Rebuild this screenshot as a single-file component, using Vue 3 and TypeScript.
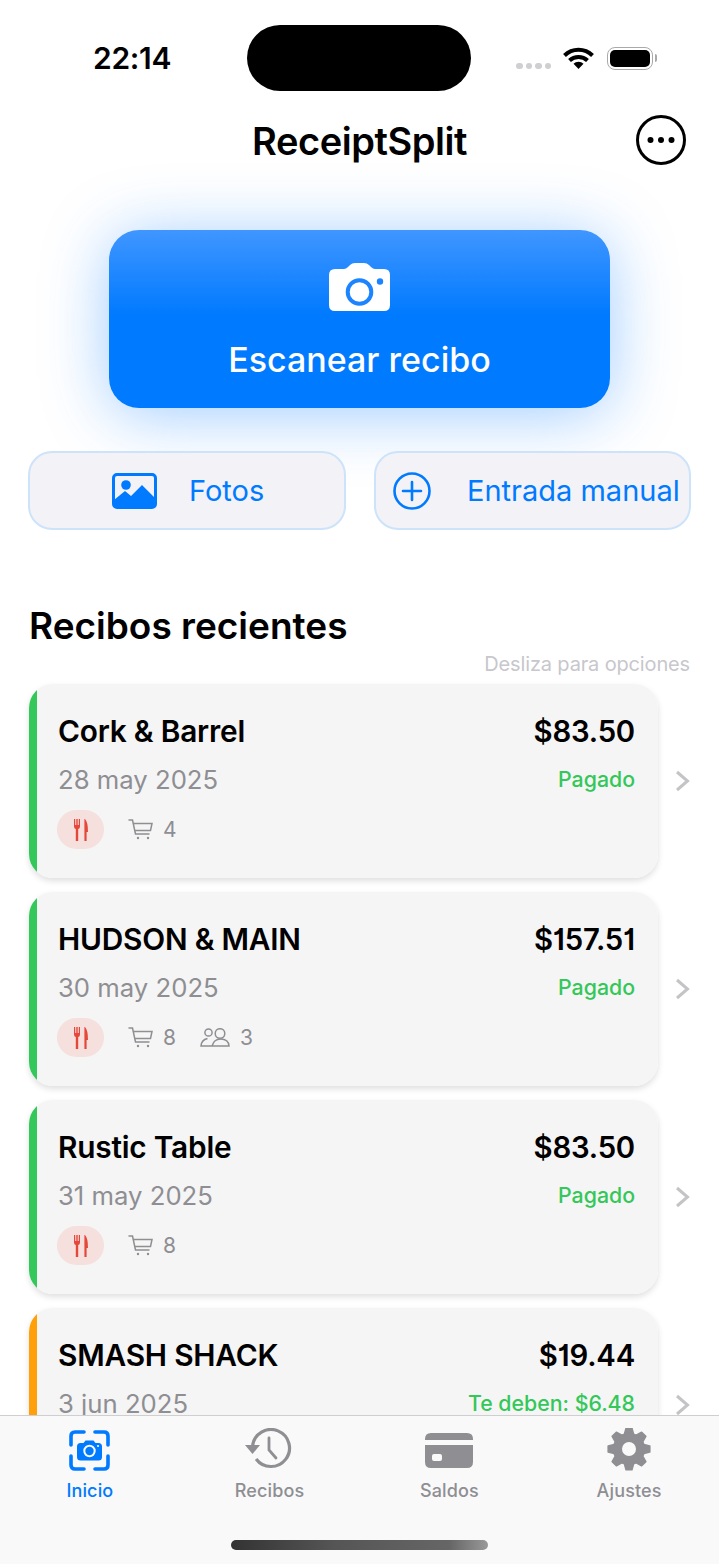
<template>
  <div class="phone">
    <header class="status">
      <span class="time">22:14</span>
      <div class="island"></div>
      <div class="dots"><i></i><i></i><i></i><i></i></div>
      <svg class="wifi" viewBox="0 0 31 22" width="31" height="22">
        <path d="M1.5 8.5a20 20 0 0 1 28 0" fill="none" stroke="#000" stroke-width="4" />
        <path d="M6.5 13.5a13 13 0 0 1 18 0" fill="none" stroke="#000" stroke-width="4" />
        <path d="M15.5 22l-5-5.2a7 7 0 0 1 10 0z" fill="#000" />
      </svg>
      <div class="battery"><div class="battery-fill"></div></div>
    </header>

    <nav class="nav">
      <h1>ReceiptSplit</h1>
      <svg class="more" viewBox="0 0 50 50" width="50" height="50">
        <circle cx="25" cy="25" r="23.5" fill="none" stroke="#000" stroke-width="3" />
        <circle cx="14.5" cy="25" r="3" />
        <circle cx="25" cy="25" r="3" />
        <circle cx="35.5" cy="25" r="3" />
      </svg>
    </nav>

    <button class="scan">
      <svg viewBox="0 0 61 48" width="61" height="48">
        <path
          d="M6 6H15Q17 6 19 4L21 2Q23 0 26 0H35Q38 0 40 2L42 4Q44 6 46 6H55Q61 6 61 12V42Q61 48 55 48H6Q0 48 0 42V12Q0 6 6 6Z"
          fill="#fff"
        />
        <circle cx="30.5" cy="29" r="11.8" fill="#fff" stroke="#1c84ff" stroke-width="4" />
        <circle cx="51" cy="18.5" r="3.2" fill="#1c84ff" />
      </svg>
      <span>Escanear recibo</span>
    </button>

    <div class="actions">
      <button class="action photos">
        <svg viewBox="0 0 45 36" width="45" height="36">
          <rect x="1.5" y="1.5" width="42" height="33" rx="3.5" fill="none" stroke="#007aff" stroke-width="3" />
          <circle cx="14" cy="12" r="4.8" fill="#007aff" />
          <path d="M2 27L13 18L19 23L30 12L43 25V32Q43 35 40 35H5Q2 35 2 32Z" fill="#007aff" />
        </svg>
        <span>Fotos</span>
      </button>
      <button class="action manual">
        <svg viewBox="0 0 38 38" width="38" height="38">
          <circle cx="19" cy="19" r="17.5" fill="none" stroke="#007aff" stroke-width="2.6" />
          <path d="M19 10V28M10 19H28" fill="none" stroke="#007aff" stroke-width="2.6" stroke-linecap="round" />
        </svg>
        <span>Entrada manual</span>
      </button>
    </div>

    <h2>Recibos recientes</h2>
    <p class="hint">Desliza para opciones</p>

    <div class="list">
      <div v-for="r in receipts" :key="r.name" class="row">
        <article class="card" :class="r.tone">
          <div class="line">
            <span class="name">{{ r.name }}</span>
            <span class="amount">{{ r.amount }}</span>
          </div>
          <div class="line second">
            <span class="date">{{ r.date }}</span>
            <span class="state">{{ r.state }}</span>
          </div>
          <div class="meta">
            <span class="badge">
              <svg viewBox="0 0 14 22" width="14" height="22" fill="#e5483b">
                <path d="M0 0H1.2V6H2.3V0H3.7V6H4.8V0H6V7.5Q6 9.5 4.2 10V22H1.8V10Q0 9.5 0 7.5Z" />
                <path d="M11 0Q14 3 14 13H12.6V22H10.4V0Z" />
              </svg>
            </span>
            <span class="count cart">
              <svg viewBox="0 0 25 21" width="25" height="21" fill="none" stroke="#8e8e93" stroke-width="1.5">
                <path d="M0.5 1H4.5L7.5 15H21.5M5.4 4.5H24L22.5 11.5H7" />
                <circle cx="10" cy="19" r="1.2" fill="#8e8e93" stroke="none" />
                <circle cx="20" cy="19" r="1.2" fill="#8e8e93" stroke="none" />
              </svg>
              {{ r.items }}
            </span>
            <span v-if="r.people" class="count people">
              <svg viewBox="0 0 30 19" width="30" height="19" fill="none" stroke="#8e8e93" stroke-width="1.5">
                <circle cx="8.5" cy="4.5" r="3.6" />
                <path d="M12 18H1Q1.3 12 7.5 10.5M12 18H29Q28.5 11 20.5 11Q14 11 12 18Z" />
                <circle cx="20" cy="5.5" r="4.8" />
              </svg>
              {{ r.people }}
            </span>
          </div>
        </article>
        <svg class="chevron" viewBox="0 0 15 22" width="15" height="22">
          <path d="M2 2L12.5 11L2 20" fill="none" stroke="#c4c4c7" stroke-width="3" />
        </svg>
      </div>
    </div>

    <footer class="tabbar">
      <div class="tab active">
        <div class="tab-icon">
          <svg viewBox="0 0 41 41" width="41" height="41">
            <path
              d="M2 15V6Q2 2 6 2H15M26 2H35Q39 2 39 6V15M39 26V35Q39 39 35 39H26M15 39H6Q2 39 2 35V26"
              fill="none"
              stroke="#007aff"
              stroke-width="3.6"
              stroke-linecap="round"
            />
            <path
              d="M11.5 13H14.5L16.5 10.5H24.5L26.5 13H29.5Q33 13 33 16.5V27Q33 30.5 29.5 30.5H11.5Q8 30.5 8 27V16.5Q8 13 11.5 13Z"
              fill="#007aff"
            />
            <circle cx="20.5" cy="21" r="5.2" fill="#007aff" stroke="#f9f9f9" stroke-width="2" />
            <circle cx="29" cy="16" r="1.1" fill="#f9f9f9" />
          </svg>
        </div>
        <span>Inicio</span>
      </div>
      <div class="tab">
        <div class="tab-icon">
          <svg viewBox="0 0 50 44" width="50" height="44">
            <path d="M7.6 18A18.5 18.5 0 1 1 11.1 31" fill="none" stroke="#8e8e93" stroke-width="3.2" />
            <path d="M0 17H15L7.5 26Z" fill="#8e8e93" />
            <path d="M24 10V22L31 30" fill="none" stroke="#8e8e93" stroke-width="2.8" stroke-linecap="round" />
          </svg>
        </div>
        <span>Recibos</span>
      </div>
      <div class="tab">
        <div class="tab-icon">
          <svg viewBox="0 0 48 35" width="48" height="35">
            <path d="M6 0H42Q48 0 48 6V7H0V6Q0 0 6 0Z" fill="#8e8e93" />
            <path
              fill-rule="evenodd"
              d="M0 12H48V29Q48 35 42 35H6Q0 35 0 29ZM9 21Q7 21 7 23V26Q7 28 9 28H15Q17 28 17 26V23Q17 21 15 21Z"
              fill="#8e8e93"
            />
          </svg>
        </div>
        <span>Saldos</span>
      </div>
      <div class="tab">
        <div class="tab-icon">
          <svg viewBox="0 1 44 44" width="44" height="44">
            <path
              :d="gearPath"
              fill="#8e8e93"
              fill-rule="evenodd"
              stroke="#8e8e93"
              stroke-width="1.6"
              stroke-linejoin="round"
            />
          </svg>
        </div>
        <span>Ajustes</span>
      </div>
      <div class="home"></div>
    </footer>
  </div>
</template>

<script setup lang="ts">
interface Receipt {
  name: string
  amount: string
  date: string
  state: string
  items: number
  people?: number
  tone: 'paid' | 'owed'
}

const receipts: Receipt[] = [
  { name: 'Cork & Barrel', amount: '$83.50', date: '28 may 2025', state: 'Pagado', items: 4, tone: 'paid' },
  { name: 'HUDSON & MAIN', amount: '$157.51', date: '30 may 2025', state: 'Pagado', items: 8, people: 3, tone: 'paid' },
  { name: 'Rustic Table', amount: '$83.50', date: '31 may 2025', state: 'Pagado', items: 8, tone: 'paid' },
  { name: 'SMASH SHACK', amount: '$19.44', date: '3 jun 2025', state: 'Te deben: $6.48', items: 3, tone: 'owed' },
]

// eight teeth round a centre hole
function buildGear(): string {
  const pt = (r: number, a: number) => `${(22 + r * Math.cos(a)).toFixed(2)} ${(22 + r * Math.sin(a)).toFixed(2)}`
  let d = ''
  for (let i = 0; i < 8; i++) {
    const a = (i * Math.PI) / 4 - Math.PI / 2
    d += `${i === 0 ? 'M' : 'L'}${pt(15.5, a - 0.3)}L${pt(21, a - 0.14)}L${pt(21, a + 0.14)}L${pt(15.5, a + 0.3)}`
  }
  d += 'Z'
  d += 'M29.8 22A7.8 7.8 0 1 0 14.2 22A7.8 7.8 0 1 0 29.8 22Z'
  return d
}

const gearPath = buildGear()
</script>

<style scoped>
.phone {
  position: relative;
  width: 719px;
  height: 1564px;
  overflow: hidden;
  background: #fff;
  font-family: Inter, 'Liberation Sans', sans-serif;
  color: #000;
}

.status {
  position: relative;
  height: 116px;
  display: flex;
  align-items: center;
}

.time {
  margin-left: 93px;
  width: 154px;
  font-size: 30px;
  font-weight: 600;
  letter-spacing: -0.3px;
}

.island {
  width: 224px;
  height: 66px;
  border-radius: 33px;
  background: #000;
}

.dots {
  display: flex;
  gap: 3px;
  margin-left: 45px;
  margin-top: 16px;
}

.dots i {
  width: 6.5px;
  height: 6.5px;
  border-radius: 50%;
  background: #cfcfd1;
}

.wifi {
  margin-left: 12px;
}

.battery {
  position: relative;
  margin-left: 13px;
  width: 46px;
  height: 23px;
  box-sizing: border-box;
  border: 1.5px solid #a9a9ab;
  border-radius: 8px;
  padding: 2px;
}

.battery::after {
  content: '';
  position: absolute;
  right: -5px;
  top: 6px;
  width: 2.5px;
  height: 8px;
  border-radius: 0 2px 2px 0;
  background: #a9a9ab;
}

.battery-fill {
  height: 100%;
  border-radius: 5px;
  background: #000;
}

.nav {
  position: relative;
  height: 50px;
  display: flex;
  align-items: center;
  justify-content: center;
}

h1 {
  margin: 0;
  font-size: 38px;
  font-weight: 600;
  letter-spacing: -0.45px;
}

.more {
  position: absolute;
  left: 636px;
  top: -1px;
}

button {
  font-family: inherit;
  margin: 0;
  padding: 0;
}

.scan {
  display: flex;
  flex-direction: column;
  align-items: center;
  width: 501px;
  height: 178px;
  margin: 64px 0 0 109px;
  padding-top: 33px;
  border: none;
  border-radius: 30px;
  background: linear-gradient(180deg, #4096ff 0%, #007aff 48%);
  box-shadow: 0 6px 66px rgba(0, 122, 255, 0.38);
  color: #fff;
  font-size: 34px;
  font-weight: 500;
}

.scan span {
  margin-top: 29px;
  line-height: 40px;
}

.actions {
  display: grid;
  grid-template-columns: 318px 317px;
  gap: 28px;
  margin: 43px 28px 0;
}

.action {
  height: 79px;
  display: flex;
  align-items: center;
  box-sizing: border-box;
  border: 2px solid #cde3fa;
  border-radius: 24px;
  background: #f2f2f7;
  color: #007aff;
  font-size: 29px;
  font-weight: 400;
}

.action svg {
  flex-shrink: 0;
}

.photos {
  padding-left: 82px;
  gap: 32px;
}

.manual {
  padding-left: 17px;
  gap: 36px;
  white-space: nowrap;
}

h2 {
  margin: 74px 0 0 29px;
  font-size: 37px;
  line-height: 44px;
  font-weight: 600;
}

.hint {
  margin: 4px 29px 8px 0;
  text-align: right;
  font-size: 20px;
  line-height: 24px;
  letter-spacing: -0.15px;
  color: #c7c7cc;
}

.list {
  display: flex;
  flex-direction: column;
  gap: 14px;
}

.row {
  display: flex;
  align-items: center;
  margin-left: 29px;
}

.card {
  width: 629px;
  height: 194px;
  box-sizing: border-box;
  padding: 27px 23px 0 29px;
  border-radius: 24px;
  background: linear-gradient(90deg, #34c759 8px, #f5f5f5 8px);
  box-shadow: 0 3px 6px rgba(0, 0, 0, 0.13);
}

.card.owed {
  background: linear-gradient(90deg, #ff9f0a 8px, #f5f5f5 8px);
}

.line {
  display: flex;
  align-items: center;
  justify-content: space-between;
  height: 40px;
}

.line.second {
  height: 36px;
  margin-top: 10px;
}

.name,
.amount {
  font-size: 29.8px;
  font-weight: 600;
  letter-spacing: -0.2px;
}

.amount {
  font-size: 29.3px;
  font-feature-settings: 'cv01';
}

.date {
  font-size: 25.7px;
  color: #8e8e93;
}

.state {
  font-size: 21.3px;
  font-weight: 500;
  color: #34c759;
}

.meta {
  display: flex;
  align-items: center;
  margin-top: 13px;
}

.badge {
  display: flex;
  align-items: center;
  justify-content: center;
  width: 47px;
  height: 39px;
  margin-left: -1px;
  border-radius: 20px;
  background: #f5e0dd;
}

.count {
  display: flex;
  align-items: center;
  gap: 10px;
  font-size: 21px;
  color: #8e8e93;
}

.cart {
  margin-left: 24px;
}

.people {
  margin-left: 24px;
}

.chevron {
  margin-left: 17px;
}

.tabbar {
  position: absolute;
  left: 0;
  right: 0;
  bottom: 0;
  height: 149px;
  box-sizing: border-box;
  display: flex;
  padding-top: 12px;
  border-top: 1px solid #cfcfcf;
  background: #f9f9f9;
}

.tab {
  flex: 1;
  display: flex;
  flex-direction: column;
  align-items: center;
  color: #8e8e93;
  font-size: 18px;
  font-weight: 500;
  letter-spacing: 0.15px;
}

.tab.active {
  color: #007aff;
}

.tab-icon {
  height: 44px;
  display: flex;
  align-items: center;
  justify-content: center;
}

.tab span {
  margin-top: 8px;
  line-height: 22px;
}

.home {
  position: absolute;
  left: 231px;
  top: 124px;
  width: 257px;
  height: 10px;
  border-radius: 5px;
  background: linear-gradient(90deg, #333 0%, #555 40%, #666 85%, #999 100%);
}
</style>

<style>
body {
  margin: 0;
}

button {
  cursor: pointer;
}
</style>
